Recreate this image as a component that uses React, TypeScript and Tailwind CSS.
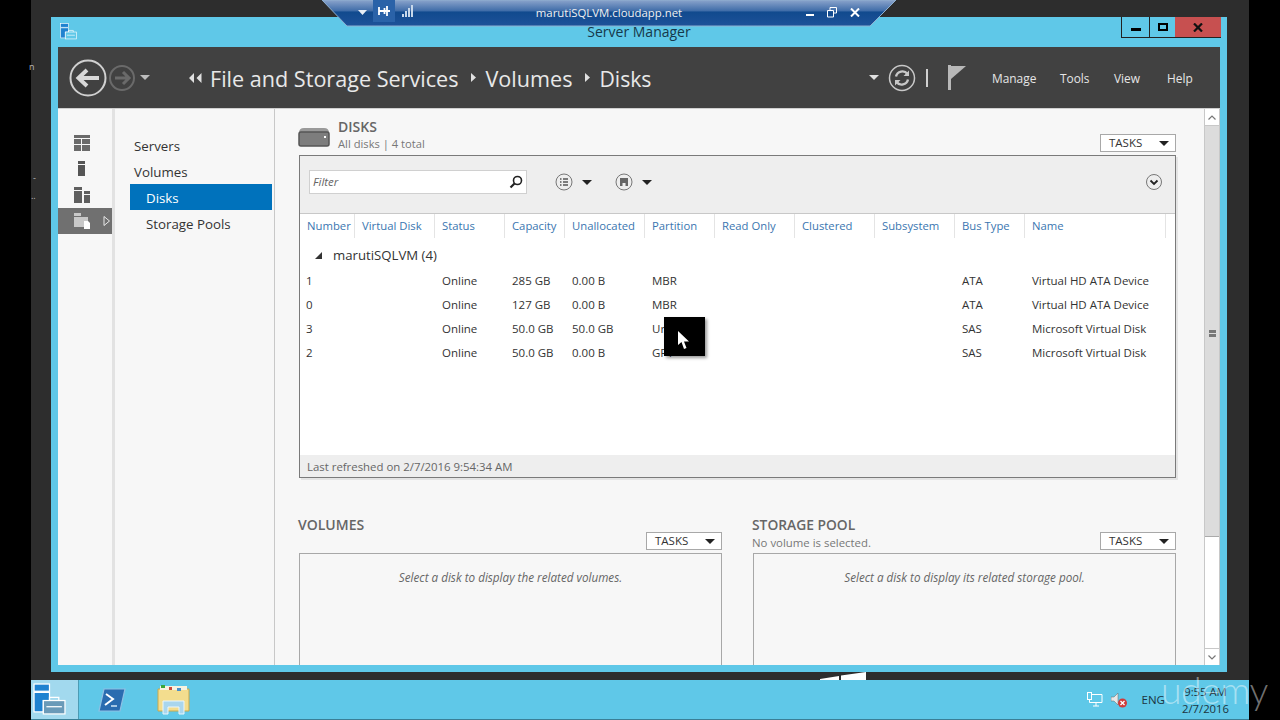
import React from 'react';

const columns = ['Number', 'Virtual Disk', 'Status', 'Capacity', 'Unallocated', 'Partition', 'Read Only', 'Clustered', 'Subsystem', 'Bus Type', 'Name'];

const disks = [
  ['1', '', 'Online', '285 GB', '0.00 B', 'MBR', '', '', '', 'ATA', 'Virtual HD ATA Device'],
  ['0', '', 'Online', '127 GB', '0.00 B', 'MBR', '', '', '', 'ATA', 'Virtual HD ATA Device'],
  ['3', '', 'Online', '50.0 GB', '50.0 GB', 'Unknown', '', '', '', 'SAS', 'Microsoft Virtual Disk'],
  ['2', '', 'Online', '50.0 GB', '0.00 B', 'GPT', '', '', '', 'SAS', 'Microsoft Virtual Disk'],
];

const gridCols = 'grid grid-cols-[55px_80px_70px_60px_80px_70px_80px_80px_80px_70px_141px]';

function Caret({ className }: { className?: string }) {
  return <span className={`inline-block w-0 h-0 border-x-[5px] border-x-transparent border-t-[5px] border-t-[#222] ${className ?? ''}`} />;
}

function TasksButton() {
  return (
    <div className="w-[76px] h-[18px] bg-white border border-[#a8a8a8] flex items-center justify-between pl-[8px] pr-[6px] text-[11.5px] text-[#333]">
      <span>TASKS</span>
      <Caret />
    </div>
  );
}

function ToolbarCircle({ children }: { children: React.ReactNode }) {
  return (
    <div className="flex items-center gap-[9px]">
      <svg width="18" height="18" viewBox="0 0 18 18" fill="none">
        <circle cx="9" cy="9" r="8" stroke="#777" strokeWidth="1" />
        {children}
      </svg>
      <Caret />
    </div>
  );
}

function EmptyPanel({ message }: { message: string }) {
  return (
    <div className="h-[112px] border border-b-0 border-[#a8a8a8] bg-[#f7f7f7] pt-[15px] text-center text-[11.7px] italic text-[#666]">
      {message}
    </div>
  );
}

function SideIcon({ children, active }: { children: React.ReactNode; active?: boolean }) {
  return (
    <div className={`relative h-[26px] flex items-center pl-[16px] ${active ? 'bg-[#707070]' : ''}`}>
      <svg width="16" height="16" viewBox="0 0 16 16">{children}</svg>
      {active && (
        <svg className="ml-[13px]" width="8" height="12" viewBox="0 0 8 12" fill="none">
          <path d="M1 1.5 L6.5 6 L1 10.5 Z" stroke="#e8e8e8" strokeWidth="1" />
        </svg>
      )}
    </div>
  );
}

function ServerToolIcon({ w, h, fill }: { w: number; h: number; fill: string }) {
  return (
    <svg width={w} height={h} viewBox="0 0 32 32" fill="none">
      <rect x="1" y="1" width="15" height="7" fill="#1f82d0" stroke="#fff" strokeWidth="1.2" />
      <path d="M1 9 H16 V17 H10 V28 H1 Z" fill="#1f82d0" stroke="#fff" strokeWidth="1.2" />
      <rect x="10" y="17" width="21" height="13" fill={fill} stroke="#fff" strokeWidth="1.2" />
      <path d="M16 17 V14 H25 V17" stroke="#fff" strokeWidth="1.2" />
      <path d="M13 23 H28" stroke="#fff" strokeWidth="1.2" />
    </svg>
  );
}

export default function App() {
  return (
    <div className="relative w-[1280px] h-[720px] flex bg-black overflow-hidden font-['Open_Sans',sans-serif]">
      {/* left edge of the recording, bits of another window */}
      <div className="w-[31px] relative text-[#bbb] text-[9px] leading-none">
        <span className="absolute left-[29px] top-[62px]">n</span>
        <span className="absolute left-[33px] top-[173px]">-</span>
        <span className="absolute left-[31px] top-[191px]">..</span>
      </div>

      <div className="w-[1218px] flex flex-col bg-[#2d2d2d]">
        <div className="h-[680px] pt-[17px] pl-[20px]">
          {/* Server Manager window */}
          <div className="w-[1176px] h-[655px] bg-[#5fc8e8] flex flex-col">
            <div className="relative h-[30px] shrink-0 flex items-start pl-[9px] pt-[6px]">
              <ServerToolIcon w={17} h={17} fill="#5fc8e8" />
              <div className="absolute left-0 right-0 top-[7px] text-center text-[14px] leading-[16px] text-[#16384a]">Server Manager</div>
              <div className="absolute right-[6px] top-0 h-[21px] flex text-black">
                <div className="w-[28px] border-l border-b border-[#222] flex items-center justify-center">
                  <div className="w-[10px] h-[3px] mt-[4px] bg-black" />
                </div>
                <div className="w-[26px] border-l border-b border-[#222] flex items-center justify-center">
                  <div className="w-[10px] h-[8px] border-2 border-black" />
                </div>
                <div className="w-[46px] bg-[#c75050] border-b border-[#222] flex items-center justify-center">
                  <svg width="10" height="9" viewBox="0 0 10 9"><path d="M1 0.5 L9 8.5 M9 0.5 L1 8.5" stroke="#111" strokeWidth="2.2" /></svg>
                </div>
              </div>
            </div>

            <div className="mx-[7px] mb-[7px] flex-1 flex flex-col min-h-0">
              {/* Header */}
              <div className="h-[62px] shrink-0 bg-[#414141] flex items-center text-[#e8e8e8] border-b border-[#cfcfcf]">
                <svg className="ml-[11px]" width="38" height="38" viewBox="0 0 38 38" fill="none">
                  <circle cx="19" cy="19" r="17.5" stroke="#d0d0d0" strokeWidth="2" />
                  <path d="M30 19 H10 M18 11 L9.5 19 L18 27" stroke="#d8d8d8" strokeWidth="4" />
                </svg>
                <svg className="ml-[2px]" width="26" height="26" viewBox="0 0 26 26" fill="none">
                  <circle cx="13" cy="13" r="12" stroke="#6a6a6a" strokeWidth="2" />
                  <path d="M6 13 H20 M14 7 L20 13 L14 19" stroke="#6a6a6a" strokeWidth="3" />
                </svg>
                <Caret className="ml-[5px] border-t-[#bdbdbd]" />
                <svg className="ml-[39px]" width="13" height="10" viewBox="0 0 13 10"><path d="M5 0 L0 5 L5 10 Z M12.5 0 L7.5 5 L12.5 10 Z" fill="#e0e0e0" /></svg>
                <span className="ml-[8px] pt-[2px] text-[21.6px] leading-[30px]">File and Storage Services</span>
                <svg className="ml-[13px]" width="5" height="9" viewBox="0 0 5 9"><path d="M0 0 L5 4.5 L0 9 Z" fill="#e0e0e0" /></svg>
                <span className="ml-[9px] pt-[2px] text-[21.6px] leading-[30px]">Volumes</span>
                <svg className="ml-[13px]" width="5" height="9" viewBox="0 0 5 9"><path d="M0 0 L5 4.5 L0 9 Z" fill="#e0e0e0" /></svg>
                <span className="ml-[9px] pt-[2px] text-[21.2px] leading-[30px]">Disks</span>

                <div className="ml-auto flex items-center">
                  <Caret className="border-x-[4px] border-t-[4px] border-t-[#e0e0e0]" />
                  <svg className="ml-[9px]" width="28" height="28" viewBox="0 0 28 28" fill="none">
                    <circle cx="14" cy="14" r="12.5" stroke="#c8c8c8" strokeWidth="1.5" />
                    <path d="M8 12.5 A6.5 6.5 0 0 1 19.5 10 M20 15.5 A6.5 6.5 0 0 1 8.5 18" stroke="#c8c8c8" strokeWidth="2.4" />
                    <path d="M21 6.5 V12 H15.5 Z M7 21.5 V16 H12.5 Z" fill="#c8c8c8" />
                  </svg>
                  <div className="ml-[10px] w-[2px] h-[18px] bg-[#d0d0d0]" />
                  <svg className="ml-[20px]" width="18" height="25" viewBox="0 0 18 25">
                    <rect x="0" y="0" width="3" height="25" fill="#b8b8b8" />
                    <path d="M3 1 H18 L3 14 Z" fill="#b8b8b8" />
                  </svg>
                  <div className="ml-[26px] mr-[28px] pt-[2px] flex text-[11.9px] text-[#e6e6e6]">
                    <span className="w-[68px]">Manage</span>
                    <span className="w-[54px]">Tools</span>
                    <span className="w-[53px]">View</span>
                    <span className="w-[25px] whitespace-nowrap">Help</span>
                  </div>
                </div>
              </div>

              {/* Main */}
              <div className="flex-1 flex min-h-0 bg-[#f7f7f7]">
                <div className="w-[54px] shrink-0 pt-[21px]">
                  <SideIcon>
                    <path d="M0 0 H16 V3 H0 Z M0 4 H7 V9 H0 Z M8 4 H16 V9 H8 Z M0 10 H7 V16 H0 Z M8 10 H16 V16 H8 Z" fill="#6a6a6a" />
                  </SideIcon>
                  <SideIcon>
                    <path d="M4 0 H11 V3 H4 Z M4 4 H11 V15 H4 Z" fill="#555" />
                  </SideIcon>
                  <SideIcon>
                    <path d="M0 0 H8 V3 H0 Z M0 4 H8 V16 H0 Z M10 4 H16 V7 H10 Z M10 8 H16 V16 H10 Z" fill="#5f5f5f" />
                  </SideIcon>
                  <SideIcon active>
                    <path d="M0 0 H7 V3 H0 Z M0 4 H14 V14 H0 Z" fill="#c8c8c8" />
                    <path d="M10 8 H14 L16 10 V16 H10 Z" fill="#fff" />
                  </SideIcon>
                </div>
                <div className="w-[3px] shrink-0 bg-[#e2e2e2]" />
                <div className="w-[160px] shrink-0 border-r border-[#c8c8c8] pt-[23px] pl-[15px] pr-[2px] text-[13.3px] text-[#333]">
                  <div className="h-[26px] leading-[28px] pl-[4px]">Servers</div>
                  <div className="h-[26px] leading-[28px] pl-[4px]">Volumes</div>
                  <div className="h-[26px] leading-[28px] pl-[16px] bg-[#0072bc] text-white">Disks</div>
                  <div className="h-[26px] leading-[28px] pl-[16px]">Storage Pools</div>
                </div>

                {/* Content */}
                <div className="w-[929px] shrink-0 pl-[24px] overflow-hidden">
                  <div className="w-[877px] h-[46px] flex items-start pt-[10px]">
                    <svg className="mt-[8px] ml-[-1px]" width="32" height="20" viewBox="0 0 32 20" fill="none">
                      <path d="M1 6 Q1 1 6 1 H26 Q31 1 31 6 Z" fill="#9a9a9a" />
                      <rect x="1" y="5" width="30" height="14" rx="2" fill="#7d7d7d" stroke="#555" strokeWidth="1.5" />
                      <rect x="26" y="9" width="2" height="2" fill="#fff" />
                    </svg>
                    <div className="ml-[8px]">
                      <div className="text-[14px] leading-[16px] font-semibold text-[#666]">DISKS</div>
                      <div className="text-[11.2px] leading-[18px] text-[#777]">All disks | 4 total</div>
                    </div>
                    <div className="ml-auto mt-[15px]"><TasksButton /></div>
                  </div>

                  {/* Disks panel */}
                  <div className="w-[877px] h-[323px] border border-[#7a7a7a] bg-white flex flex-col shadow-[2px_2px_0_#e4e4e4]">
                    <div className="h-[58px] shrink-0 bg-[#eeeeee] border-b border-[#c8c8c8] flex items-center pl-[9px] pb-[5px]">
                      <div className="w-[218px] h-[24px] bg-white border border-[#d0d0d0] flex items-center justify-between pl-[3px] pr-[3px] text-[11.5px] italic text-[#666]">
                        <span>Filter</span>
                        <svg width="14" height="14" viewBox="0 0 14 14" fill="none">
                          <circle cx="8.5" cy="5.5" r="4" stroke="#222" strokeWidth="1.6" />
                          <path d="M5.5 8.5 L1.5 12.5" stroke="#222" strokeWidth="2.2" />
                        </svg>
                      </div>
                      <div className="ml-[28px]">
                        <ToolbarCircle>
                          <path d="M5 6 H6.5 M5 9 H6.5 M5 12 H6.5 M8 6 H13 M8 9 H13 M8 12 H13" stroke="#555" strokeWidth="1.5" />
                        </ToolbarCircle>
                      </div>
                      <div className="ml-[23px]">
                        <ToolbarCircle>
                          <path d="M5 5 H13 V13 H5 Z" fill="#666" />
                          <path d="M7.5 10 H10.5 V13 H7.5 Z" fill="#eee" />
                        </ToolbarCircle>
                      </div>
                      <svg className="ml-auto mr-[13px]" width="16" height="16" viewBox="0 0 16 16" fill="none">
                        <circle cx="8" cy="8" r="7.5" stroke="#777" strokeWidth="1" />
                        <path d="M4.5 6.5 L8 10 L11.5 6.5" stroke="#222" strokeWidth="1.8" />
                      </svg>
                    </div>

                    <div className={`${gridCols} h-[24px] shrink-0 text-[11.3px] text-[#3a76b0]`}>
                      {columns.map((c) => (
                        <div key={c} className="pl-[7px] pt-[3px] whitespace-nowrap leading-[18px] border-r border-[#e4e4e4]">{c}</div>
                      ))}
                    </div>

                    <div className="h-[27px] shrink-0 flex items-center pl-[15px] text-[13.2px] text-[#333] mt-[4px]">
                      <span className="w-0 h-0 border-l-[7px] border-l-transparent border-b-[7px] border-b-[#333]" />
                      <span className="ml-[11px]">marutiSQLVM (4)</span>
                    </div>

                    {disks.map((row) => (
                      <div key={row[0]} className={`${gridCols} h-[24px] shrink-0 text-[11.5px] leading-[24px] text-[#333]`}>
                        {row.map((cell, i) => (
                          <div key={i} className={`${i === 0 ? 'pl-[6px]' : 'pl-[7px]'} whitespace-nowrap`}>{cell}</div>
                        ))}
                      </div>
                    ))}

                    <div className="mt-auto h-[22px] shrink-0 bg-[#eeeeee] pl-[7px] text-[11.4px] leading-[23px] text-[#666]">Last refreshed on 2/7/2016 9:54:34 AM</div>
                  </div>

                  {/* Lower panels */}
                  <div className="flex w-[877px] mt-[38px]">
                    <div className="w-[423px]">
                      <div className="h-[37px] flex items-start justify-between">
                        <div className="mt-[1px] ml-[-1px] text-[14px] leading-[16px] font-semibold text-[#666]">VOLUMES</div>
                        <div className="mt-[16px]"><TasksButton /></div>
                      </div>
                      <EmptyPanel message="Select a disk to display the related volumes." />
                    </div>
                    <div className="w-[423px] ml-[31px]">
                      <div className="h-[37px] flex items-start justify-between">
                        <div className="ml-[-1px] mt-[1px]">
                          <div className="text-[13.8px] leading-[16px] font-semibold text-[#666]">STORAGE POOL</div>
                          <div className="text-[11.4px] leading-[19px] text-[#777]">No volume is selected.</div>
                        </div>
                        <div className="mt-[16px]"><TasksButton /></div>
                      </div>
                      <EmptyPanel message="Select a disk to display its related storage pool." />
                    </div>
                  </div>
                </div>

                {/* Scrollbar */}
                <div className="w-[16px] shrink-0 bg-white border-x border-[#c8c8c8] flex flex-col">
                  <div className="h-[17px] flex items-center justify-center border-b border-[#c8c8c8]">
                    <svg width="8" height="5" viewBox="0 0 8 5" fill="none"><path d="M0.5 4.5 L4 1 L7.5 4.5" stroke="#777" strokeWidth="1.2" /></svg>
                  </div>
                  <div className="h-[411px] bg-[#dcdcdc] border-b border-[#aaaaaa] flex items-center justify-center">
                    <div className="w-[7px] h-[7px] mt-[4px] border-y-[3px] border-[#777] bg-[#dcdcdc]" />
                  </div>
                  <div className="flex-1" />
                  <div className="h-[17px] flex items-center justify-center border-t border-[#c8c8c8]">
                    <svg width="8" height="5" viewBox="0 0 8 5" fill="none"><path d="M0.5 0.5 L4 4 L7.5 0.5" stroke="#777" strokeWidth="1.2" /></svg>
                  </div>
                </div>
              </div>
            </div>
          </div>
        </div>

        {/* Taskbar */}
        <div className="h-[40px] bg-[#5fc8e8] border-b border-[#3a7f96] flex items-stretch text-[#1c3440]">
          <div className="w-[48px] bg-[#a2d9ee] border-r border-[#4b9cb5] flex items-center pl-[2px]">
            <ServerToolIcon w={33} h={33} fill="#6a9ab8" />
          </div>
          <div className="w-[66px] flex items-center justify-center">
            <svg width="28" height="24" viewBox="0 0 28 24">
              <path d="M6 1 H27 L22 23 H1 Z" fill="#2a6cb0" stroke="#8fc0e4" strokeWidth="1.2" />
              <path d="M8 6 L15 11 L7 17" stroke="#fff" strokeWidth="2" fill="none" />
              <path d="M13 18 H19" stroke="#cfe4f4" strokeWidth="1.5" />
            </svg>
          </div>
          <div className="w-[56px] flex items-center justify-center">
            <svg width="33" height="31" viewBox="0 0 33 31">
              <path d="M1 5 H32 V27 H1 Z" fill="#f3dd8e" stroke="#c9a94d" />
              <path d="M3 2 H30 V6 H3 Z" fill="#f7f2df" />
              <path d="M4 1 H8 V4 H4 Z" fill="#3aa63a" />
              <path d="M12 3 H15 V6 H12 Z" fill="#c94a3a" />
              <path d="M20 4 H24 V7 H20 Z" fill="#4a90c9" />
              <path d="M6 17 H27 V30 H22 V23 H11 V30 H6 Z" fill="#a9d6ee" stroke="#eaf6fc" />
            </svg>
          </div>

          <div className="ml-auto flex items-center pr-[20px]">
            <svg width="16" height="15" viewBox="0 0 16 15" fill="none">
              <rect x="0.5" y="0.5" width="4" height="7" fill="#5fc8e8" stroke="#fff" />
              <path d="M4.5 2.5 H15 V10.5 H2.5 V8" stroke="#fff" />
              <path d="M6 14 H12 M9 10.5 V14" stroke="#fff" />
            </svg>
            <svg className="ml-[8px]" width="16" height="16" viewBox="0 0 16 16">
              <path d="M0 5 H3 L7 1 V13 L3 9 H0 Z" fill="#e8e8e8" stroke="#666" strokeWidth="0.5" />
              <circle cx="11.5" cy="11" r="4.5" fill="#d03a3a" />
              <path d="M9.5 9 L13.5 13 M13.5 9 L9.5 13" stroke="#fff" strokeWidth="1.3" />
            </svg>
            <span className="ml-[15px] text-[11.5px]">ENG</span>
            <div className="ml-[17px] text-[11.3px] leading-[17px] text-center">
              <div>9:55 AM</div>
              <div>2/7/2016</div>
            </div>
          </div>
        </div>
      </div>

      {/* Remote desktop connection bar */}
      <svg className="absolute left-[322px] top-0" width="575" height="27" viewBox="0 0 575 27">
        <defs>
          <linearGradient id="bar" x1="0" y1="0" x2="0" y2="1">
            <stop offset="0" stopColor="#8ba4cc" />
            <stop offset="0.42" stopColor="#3f6ca8" />
            <stop offset="0.46" stopColor="#114a8e" />
            <stop offset="1" stopColor="#1e5299" />
          </linearGradient>
        </defs>
        <path d="M0 0 H574 L548 26 H25 Z" fill="url(#bar)" stroke="#8fb0d0" strokeWidth="1" />
      </svg>
      <div className="absolute left-[322px] top-0 w-[575px] h-[26px] flex items-center text-[#f0f0f0]">
        <svg className="absolute left-[36px] top-[10px]" width="9" height="5" viewBox="0 0 9 5"><path d="M0 0 H9 L4.5 5 Z" fill="#e8eef6" /></svg>
        <div className="absolute left-[51px] top-0 w-[22px] h-[22px] bg-[#2a62a8] flex items-center justify-center">
          <svg width="12" height="10" viewBox="0 0 12 10"><path d="M1 1 V9 M9 0 V10 M1 5 H12 M6.5 2 V8" stroke="#fff" strokeWidth="1.8" /></svg>
        </div>
        <svg className="absolute left-[80px] top-[5px]" width="11" height="12" viewBox="0 0 11 12"><path d="M0 9 H2 V12 H0 Z M3 6 H5 V12 H3 Z M6 3 H8 V12 H6 Z M9 0 H11 V12 H9 Z" fill="#c8d8ea" /></svg>
        <div className="absolute left-0 right-[1px] top-[5px] text-center text-[11.4px] leading-[16px]">marutiSQLVM.cloudapp.net</div>
        <svg className="absolute left-[484px] top-[10px]" width="8" height="6" viewBox="0 0 8 6"><path d="M0 4 H8 V6 H0 Z" fill="#fff" /></svg>
        <svg className="absolute left-[505px] top-[7px]" width="10" height="11" viewBox="0 0 10 11" fill="none"><path d="M3 3 V0.5 H9.5 V6 H7 M0.5 3.5 H6.5 V10 H0.5 Z" stroke="#fff" /></svg>
        <svg className="absolute left-[528px] top-[8px]" width="10" height="9" viewBox="0 0 10 9"><path d="M1 0.5 L9 8.5 M9 0.5 L1 8.5" stroke="#fff" strokeWidth="2" /></svg>
      </div>

      {/* desktop logo showing under the window */}
      <svg className="absolute left-[820px] top-[672px]" width="47" height="8" viewBox="0 0 47 8"><path d="M0 7 L19 4 V8 H0 Z M21 3.5 L46 0 V8 H21 Z" fill="#fff" /></svg>

      {/* captured cursor */}
      <div className="absolute left-[664px] top-[317px] w-[41px] h-[39px] bg-black shadow-[2px_2px_3px_rgba(0,0,0,0.4)]">
        <svg className="absolute left-[14px] top-[14px]" width="12" height="19" viewBox="0 0 12 19">
          <path d="M0 0 L0 14 L3.5 11 L6 18 L8.5 17 L6 10.5 L11 10.5 Z" fill="#fff" />
        </svg>
      </div>

      {/* udemy watermark */}
      <div className="absolute left-[1161px] top-[665px] text-[37.5px] leading-[50px] tracking-[-0.5px] text-white/45 font-['Lato',sans-serif] font-light">udemy</div>
    </div>
  );
}
